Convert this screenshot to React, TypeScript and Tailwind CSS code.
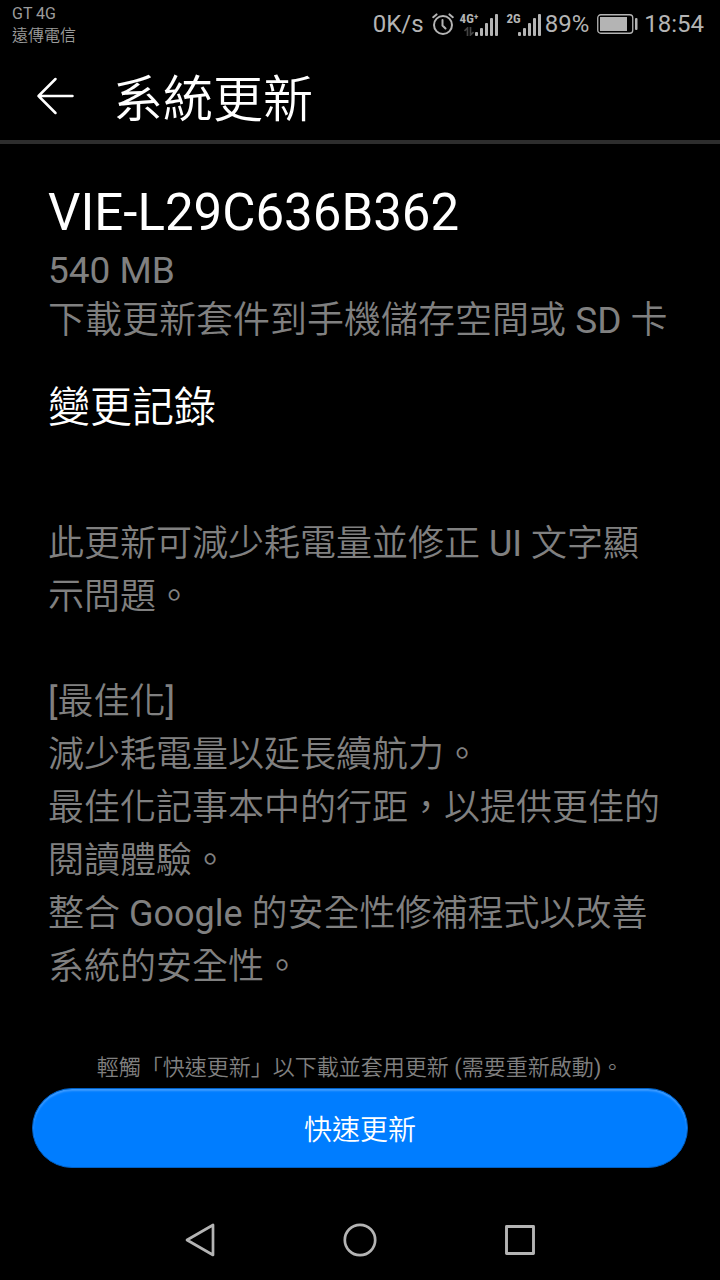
const NOTES = [
  ['此更新可減少耗電量並修正 UI 文字顯示問題。'],
  [
    '[最佳化]',
    '減少耗電量以延長續航力。',
    '最佳化記事本中的行距，以提供更佳的閱讀體驗。',
    '整合 Google 的安全性修補程式以改善系統的安全性。',
  ],
];

function AlarmIcon() {
  return (
    <svg width="22" height="22" viewBox="0 0 22 22" fill="none" stroke="currentColor" strokeWidth="2" strokeLinecap="round">
      <circle cx="11" cy="12" r="9" />
      <path d="M10.500 7v5.500l3 3M1.200 4.200 4.500 1.400M20.800 4.200 17.500 1.400" />
    </svg>
  );
}

function SignalIcon({ label, dataActive }: { label: string; dataActive?: boolean }) {
  return (
    <span className="flex items-start">
      <span className="flex flex-col items-end">
        <span className="font-['Roboto_Condensed',Roboto,sans-serif] text-[13px] leading-3 font-bold">
          {label}
        </span>
        {dataActive && (
          <svg width="10" height="9" viewBox="0 0 10 9" fill="none" stroke="#444444" strokeWidth="1.700" className="mt-0.5 mr-1">
            <path d="M3.500 9V1L.5 4M6.500 0v8l3-3" />
          </svg>
        )}
      </span>
      <svg width="24" height="23" viewBox="0 0 24 23" fill="currentColor" className="-ml-1">
        <rect x="1" y="19" width="3" height="4" rx="1" />
        <rect x="6" y="15" width="3" height="8" rx="1" />
        <rect x="11" y="10" width="3" height="13" rx="1" />
        <rect x="16" y="5" width="3" height="18" rx="1" />
        <rect x="21" y="1" width="3" height="22" rx="1" />
      </svg>
    </span>
  );
}

function BatteryIcon() {
  return (
    <svg width="41" height="20" viewBox="0 0 41 20" fill="none">
      <rect x=".75" y=".75" width="35" height="18.500" rx="3" stroke="currentColor" strokeWidth="1.300" />
      <rect x="3" y="3" width="27" height="14" fill="currentColor" />
      <rect x="38" y="4" width="2.500" height="12" rx="1" fill="currentColor" />
    </svg>
  );
}

function StatusBar() {
  return (
    <div className="flex h-13 items-start justify-between pl-3 pr-4 text-[#b4b4b4]">
      <div className="pt-[3px] text-[16px] leading-[22px] text-[#9c9c9c]">
        <div>GT 4G</div>
        <div>遠傳電信</div>
      </div>
      <div className="flex items-center pt-3 text-2xl leading-6">
        <span>0K/s</span>
        <span className="ml-2"><AlarmIcon /></span>
        <span className="ml-1.5"><SignalIcon label="4G⁺" dataActive /></span>
        <span className="ml-2"><SignalIcon label="2G" /></span>
        <span className="ml-1">89%</span>
        <span className="ml-2"><BatteryIcon /></span>
        <span className="ml-1.5">18:54</span>
      </div>
    </div>
  );
}

function NavBar() {
  return (
    <nav className="flex h-20 items-center justify-center gap-31 text-[#b4b4b4]">
      <button aria-label="返回">
        <svg width="36" height="36" viewBox="0 0 36 36" fill="none" stroke="currentColor" strokeWidth="2.700" strokeLinejoin="round">
          <path d="M31 3v30L5 18z" />
        </svg>
      </button>
      <button aria-label="主畫面">
        <svg width="36" height="36" viewBox="0 0 36 36" fill="none" stroke="currentColor" strokeWidth="2.700">
          <circle cx="18" cy="18" r="15.200" />
        </svg>
      </button>
      <button aria-label="最近使用">
        <svg width="36" height="36" viewBox="0 0 36 36" fill="none" stroke="currentColor" strokeWidth="2.900" strokeLinejoin="round">
          <rect x="4.500" y="4.500" width="27" height="27" />
        </svg>
      </button>
    </nav>
  );
}

export default function App() {
  return (
    <div
      lang="zh-Hant"
      className="flex min-h-screen flex-col bg-black font-[Roboto,'Noto_Sans_CJK_TC_DemiLight','Noto_Sans_CJK_TC',sans-serif]"
    >
      <StatusBar />
      <header className="flex h-[92px] items-center gap-[38px] border-b-4 border-[#2d2d2d] pl-9 text-white">
        <button aria-label="返回上一頁">
          <svg width="39" height="40" viewBox="0 0 39 40" fill="none" stroke="currentColor" strokeWidth="2.500" strokeLinecap="round" strokeLinejoin="round">
            <path d="M19.500 3 2.500 20l17 17M2.500 20h34" />
          </svg>
        </button>
        <h1 className="pt-2 text-[50px] leading-[60px]">系統更新</h1>
      </header>

      <main className="flex-1 px-12 pt-9 text-4xl text-[#808080]">
        <h2 className="text-[51px] leading-[66px] text-white">VIE-L29C636B362</h2>
        <div className="text-[37px] leading-[50px]">
          <p>540 MB</p>
          <p>下載更新套件到手機儲存空間或 SD 卡</p>
        </div>
        <h3 className="mt-8 text-[42px] leading-[60px] text-white">變更記錄</h3>
        <div className="mt-20 flex flex-col gap-13 leading-[53px]">
          {NOTES.map((lines, i) => (
            <div key={i}>
              {lines.map(line => (
                <p key={line}>{line}</p>
              ))}
            </div>
          ))}
        </div>
      </main>

      <footer className="px-8 pb-8 text-center">
        <p className="text-[22px] leading-10 text-[#808080]">
          輕觸「快速更新」以下載並套用更新 (需要重新啟動)。
        </p>
        <button className="h-20 w-full rounded-full border border-[#0060c4] bg-[#007dff] pt-1.5 text-[28px] text-white shadow-[inset_0_2px_2px_#3d9bff]">
          快速更新
        </button>
      </footer>
      <NavBar />
    </div>
  );
}
